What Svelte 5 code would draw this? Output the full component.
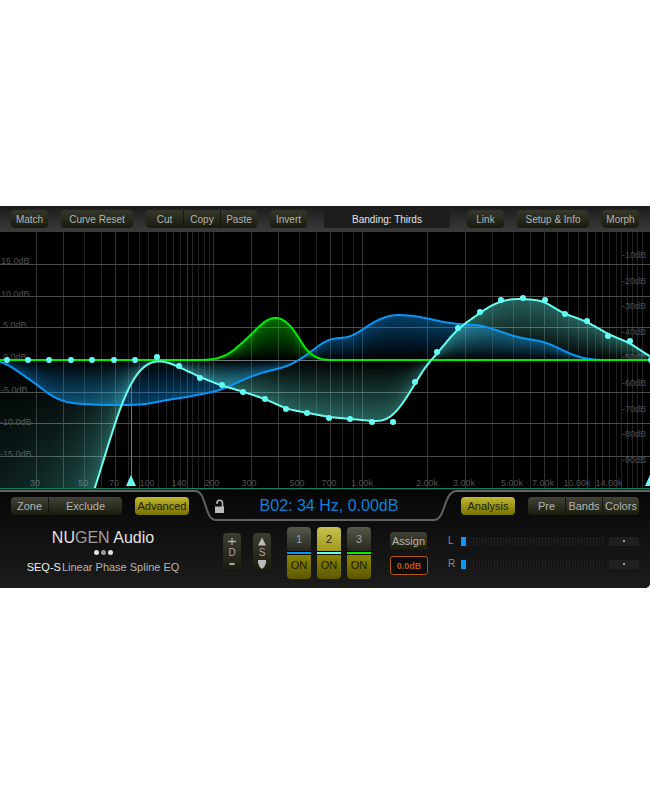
<script lang="ts">
	type Point = [number, number];

	const zero = 128;
	const bottom = 256;

	const gridX = [
		36, 63, 84, 101, 115, 128, 139, 148, 158, 166, 173, 180, 187, 192, 198, 204, 209, 213, 251, 278,
		299, 316, 330, 342, 353, 362, 427, 465, 492, 513, 530, 544, 557, 568, 578, 587, 595, 602, 609,
		616, 621, 627, 632, 637, 642
	];
	const strongX = [36, 63, 115, 187, 213, 251, 278, 330, 362, 427, 465, 544, 587];
	const gridY = [32, 64, 95, 128, 160, 191, 224];

	const gainLabels = [
		{ text: '15.0dB', x: 1, y: 32 },
		{ text: '10.0dB', x: 1, y: 65 },
		{ text: '5.0dB', x: 3, y: 96 },
		{ text: '0.0dB', x: 3, y: 128 },
		{ text: '-5.0dB', x: 1, y: 161 },
		{ text: '-10.0dB', x: 0, y: 193 },
		{ text: '-15.0dB', x: 0, y: 225 }
	];
	const levelLabels = [10, 20, 30, 40, 50, 60, 70, 80, 90];
	const freqLabels = [
		{ text: '30', x: 35 },
		{ text: '50', x: 83 },
		{ text: '70', x: 114 },
		{ text: '100', x: 147 },
		{ text: '140', x: 179 },
		{ text: '200', x: 212 },
		{ text: '300', x: 249 },
		{ text: '500', x: 297 },
		{ text: '700', x: 329 },
		{ text: '1.00k', x: 362 },
		{ text: '2.00k', x: 427 },
		{ text: '3.00k', x: 464 },
		{ text: '5.00k', x: 512 },
		{ text: '7.00k', x: 543 },
		{ text: '10.00k', x: 577 },
		{ text: '14.00k', x: 609 }
	];

	const blue: Point[] = [
		[0, 130], [7, 132], [13, 136], [23, 143], [36, 152], [50, 163], [60, 168], [70, 171], [83, 172],
		[103, 173], [117, 173], [133, 173], [147, 172], [167, 168], [187, 165], [207, 161], [217, 159],
		[228, 155], [245, 147], [258, 142], [268, 139], [282, 136], [292, 132], [299, 128], [312, 119],
		[322, 111], [330, 107], [337, 106], [345, 106], [352, 104], [362, 98], [372, 91], [382, 86],
		[392, 83], [402, 83], [415, 84], [430, 87], [443, 90], [458, 92], [470, 93], [480, 93],
		[490, 96], [502, 100], [513, 104], [527, 107], [540, 109], [550, 112], [562, 118], [573, 123],
		[587, 127], [600, 128], [651, 128]
	];
	const green: Point[] = [
		[0, 128], [205, 128], [215, 127], [222, 125], [232, 120], [243, 110], [252, 102], [260, 93],
		[268, 87], [276, 85], [283, 87], [290, 93], [297, 102], [303, 114], [310, 122], [317, 126],
		[325, 128], [651, 128]
	];
	const cyan: Point[] = [
		[0, 540], [95, 256], [101, 236], [108, 214], [115, 191], [122, 171], [131, 151], [138, 140],
		[147, 132], [155, 129], [160, 129], [167, 130], [179, 135], [200, 145], [220, 153], [244, 160],
		[265, 167], [287, 177], [308, 181], [329, 185], [351, 187], [372, 189], [382, 189], [388, 187],
		[395, 181], [402, 173], [408, 163], [415, 152], [422, 140], [429, 130], [437, 122], [447, 109],
		[458, 97], [467, 90], [480, 81], [490, 74], [502, 69], [512, 67], [523, 67], [537, 68],
		[545, 70], [553, 75], [565, 82], [577, 86], [587, 90], [598, 96], [608, 102], [620, 107],
		[630, 111], [640, 118], [651, 125]
	];

	const dots: Point[] = [
		[7, 128], [28, 128], [49, 128], [71, 128], [92, 128], [114, 128], [135, 128], [157, 125],
		[179, 134], [200, 146], [222, 153], [243, 160], [265, 167], [286, 177], [307, 181], [329, 186],
		[350, 187], [372, 190], [393, 190], [415, 150], [437, 120], [458, 96], [480, 80], [501, 68],
		[523, 66], [545, 68], [565, 82], [587, 89], [608, 104], [630, 109], [651, 128]
	];

	// one y value per pixel column, eased between the control points
	function sample(points: Point[]): number[] {
		const raw: number[] = [];
		let i = 0;
		for (let x = 0; x <= 650; x++) {
			while (i < points.length - 2 && x >= points[i + 1][0]) i++;
			const [x0, y0] = points[i];
			const [x1, y1] = points[i + 1];
			raw.push(y0 + ((y1 - y0) * (x - x0)) / (x1 - x0));
		}
		let out = raw;
		for (let pass = 0; pass < 3; pass++) {
			const src = out;
			out = src.map((_, x) => {
				const r = Math.min(4, x, 650 - x);
				let sum = 0;
				for (let k = -r; k <= r; k++) sum += src[x + k];
				return sum / (2 * r + 1);
			});
		}
		return out;
	}

	function toPath(ys: number[]): string {
		return ys.map((y, x) => `${x ? 'L' : 'M'}${x} ${y.toFixed(2)}`).join('');
	}

	// every column fades from the zero line towards the curve
	function toColumns(ys: number[]) {
		return ys
			.map((y, x) => ({ x, y: Math.min(y, zero), h: Math.abs(y - zero), up: y < zero }))
			.filter((c) => c.h > 0.5);
	}

	const curves = [
		{ name: 'blue', ys: sample(blue), color: '#0a96f5', opacity: 0.42 },
		{ name: 'green', ys: sample(green), color: '#00ee00', opacity: 0.45 },
		{ name: 'cyan', ys: sample(cyan), color: '#66fff0', opacity: 0.38 }
	];

	const bands = ['1', '2', '3'];
	let selected = $state('2');
	let gain = $state('0.0dB');
</script>

<main>
	<div class="plugin">
		<header class="toolbar">
			<button class="btn small">Match</button>
			<button class="btn wide">Curve Reset</button>
			<div class="group">
				<button class="btn small">Cut</button>
				<button class="btn small">Copy</button>
				<button class="btn small">Paste</button>
			</div>
			<button class="btn small">Invert</button>
			<button class="banding">Banding: Thirds</button>
			<button class="btn small">Link</button>
			<button class="btn wide">Setup &amp; Info</button>
			<button class="btn small">Morph</button>
		</header>

		<svg class="chart" viewBox="0 0 650 258" role="img" aria-label="EQ curves">
			<defs>
				{#each curves as c}
					<linearGradient id="{c.name}-up" x1="0" y1="1" x2="0" y2="0">
						<stop offset="0" stop-color={c.color} stop-opacity="0" />
						<stop offset="1" stop-color={c.color} stop-opacity={c.opacity} />
					</linearGradient>
					<linearGradient id="{c.name}-down" x1="0" y1="0" x2="0" y2="1">
						<stop offset="0" stop-color={c.color} stop-opacity="0" />
						<stop offset="1" stop-color={c.color} stop-opacity={c.opacity} />
					</linearGradient>
				{/each}
				<clipPath id="plot"><rect width="650" height={bottom} /></clipPath>
			</defs>
			{#each gridX as x}
				<rect {x} y="0" width="1" height={bottom} fill={strongX.includes(x) ? '#323232' : '#232323'} />
			{/each}
			{#each gridY as y}
				<rect x="0" {y} width="650" height="1" fill={y === zero ? '#777' : '#4c4c4c'} />
			{/each}
			<g class="labels">
				{#each gainLabels as l}
					<text x={l.x} y={l.y}>{l.text}</text>
				{/each}
				{#each levelLabels as db, i}
					<text x="646" y={26 + Math.round(i * 25.6)} text-anchor="end">-{db}dB</text>
				{/each}
				{#each freqLabels as l}
					<text x={l.x} y="254" text-anchor="middle">{l.text}</text>
				{/each}
			</g>
			<g clip-path="url(#plot)">
				{#each curves as c}
					<g shape-rendering="crispEdges">
						{#each toColumns(c.ys) as col}
							<rect x={col.x} y={col.y} width="1" height={col.h} fill="url(#{c.name}-{col.up ? 'up' : 'down'})" />
						{/each}
					</g>
				{/each}
				<rect x="131" y="151" width="1" height="94" fill="#3c8f88" />
				{#each curves as c}
					<path d={toPath(c.ys)} fill="none" stroke={c.color} stroke-width="2" />
				{/each}
				{#each dots as [x, y]}
					<circle cx={x} cy={y} r="3" fill="#66fff5" />
				{/each}
				<path d="M131 243l5 11h-10zM650 243l5 11h-10z" fill="#66fff5" />
			</g>
			<rect x="0" y="256" width="650" height="1" fill="#1c7a58" />
			<rect x="0" y="257" width="650" height="1" fill="#0c2a20" />
		</svg>

		<section class="panel">
			<svg class="outline" viewBox="0 0 650 32" aria-hidden="true">
				<path
					d="M0 1H195C207 1 204 30 216 30H434C446 30 443 1 457 1H650"
					fill="none"
					stroke="#626262"
					stroke-width="2"
				/>
			</svg>

			<div class="row top">
				<div class="group">
					<button class="btn mode small">Zone</button>
					<button class="btn mode exclude">Exclude</button>
				</div>
				<button class="btn mode active">Advanced</button>
				<div class="readout">
					<svg class="lock" width="12" height="15" viewBox="0 0 12 15" aria-hidden="true">
						<path d="M3 5V4a2.500 2.500 0 0 1 5.500 0V8" fill="none" stroke="#bbb" stroke-width="1.500" />
						<rect x="1" y="7.500" width="9" height="6.500" fill="#bbb" />
					</svg>
					<output>B02: 34 Hz, 0.00dB</output>
				</div>
				<button class="btn mode active">Analysis</button>
				<div class="group">
					<button class="btn mode small">Pre</button>
					<button class="btn mode small">Bands</button>
					<button class="btn mode small">Colors</button>
				</div>
			</div>

			<div class="row main">
				<div class="brand">
					<h1>NU<span>GEN</span> Audio</h1>
					<div class="pips"><i></i><i class="dim"></i><i></i></div>
					<p><b>SEQ-S</b><span>Linear Phase Spline EQ</span></p>
				</div>

				<div class="controls">
					<button class="stepper" aria-label="Depth">
						<svg width="8" height="8" viewBox="0 0 8 8"><path d="M4 1v7M0 4.500h8" stroke="#aaa" stroke-width="1.300" /></svg>
						<span>D</span>
						<svg width="8" height="8" viewBox="0 0 8 8"><path d="M1.500 3h5" stroke="#aaa" stroke-width="2" /></svg>
					</button>
					<button class="stepper" aria-label="Shift">
						<svg width="8" height="9" viewBox="0 0 8 9"><path d="M4 0.500l4 8H0z" fill="#bbb" /></svg>
						<span>S</span>
						<svg width="8" height="9" viewBox="0 0 8 9"><path d="M0 0h8v3q-1 4-4 6q-3-2-4-6z" fill="#bbb" /></svg>
					</button>
					<div class="bands">
						{#each bands as band}
							<div class="band band-{band}">
								<button
									class="number"
									class:selected={selected === band}
									aria-pressed={selected === band}
									onclick={() => (selected = band)}>{band}</button
								>
								<button class="on" aria-label="Band {band} on">ON</button>
							</div>
						{/each}
					</div>
					<div class="assign">
						<button class="btn mode small">Assign</button>
						<input type="text" aria-label="Output gain" bind:value={gain} />
					</div>
				</div>

				<div class="meters">
					{#each ['L', 'R'] as channel}
						<div class="meter">
							<span>{channel}</span>
							<div class="bar" role="meter" aria-label="{channel} level" aria-valuenow="4" aria-valuemin="0" aria-valuemax="100">
								<div class="level"></div>
							</div>
							<div class="peak"><i></i></div>
						</div>
					{/each}
				</div>
			</div>
		</section>
	</div>
</main>

<style>
	:global(body) {
		margin: 0;
		background: #ffffff;
	}

	main {
		min-height: 100vh;
		display: flex;
		flex-direction: column;
		justify-content: center;
		font-family: 'Liberation Sans', Arial, sans-serif;
	}

	.plugin {
		background: #000000;
		border-bottom-right-radius: 5px;
		overflow: hidden;
	}

	button,
	input {
		font-family: inherit;
		border: 0;
		margin: 0;
		padding: 0;
		box-sizing: border-box;
	}

	.toolbar {
		display: flex;
		align-items: center;
		gap: 13px;
		height: 26px;
		padding: 0 11px;
		background: linear-gradient(#1b1b1b, #3b3b3b);
	}

	.btn {
		height: 18px;
		padding-top: 2px;
		border-radius: 4px;
		background: linear-gradient(#35372b, #171b0c);
		color: #b4b4b4;
		font-size: 10px;
		line-height: 16px;
		white-space: nowrap;
		flex: none;
	}

	.small {
		width: 37px;
	}

	.wide {
		width: 72px;
	}

	.exclude {
		width: 74px;
	}

	.group {
		display: flex;
		flex: none;
	}

	.group .btn {
		border-radius: 0;
	}

	.group .btn + .btn {
		border-left: 1px solid #14160f;
	}

	.group .btn:first-child {
		border-radius: 4px 0 0 4px;
	}

	.group .btn:last-child {
		border-radius: 0 4px 4px 0;
	}

	.banding {
		flex: 1;
		height: 18px;
		margin: 0 4px;
		border-radius: 3px;
		background: #1d1d1d;
		color: #e4e4e4;
		font-size: 10px;
	}

	.chart {
		display: block;
		width: 100%;
		height: auto;
		background: #000000;
	}

	.labels text {
		font-size: 9px;
		fill: #505050;
	}

	.panel {
		position: relative;
		background: linear-gradient(#060606, #1c1c1c);
		padding-bottom: 9px;
	}

	.outline {
		position: absolute;
		top: 0;
		left: 0;
		width: 100%;
		height: auto;
	}

	.row {
		position: relative;
		display: flex;
		padding: 0 11px;
	}

	.top {
		padding-top: 7px;
		align-items: center;
		gap: 13px;
	}

	.mode {
		padding-top: 0;
		font-size: 11px;
		line-height: 18px;
		background: linear-gradient(#424337, #191d0d);
	}

	.active {
		width: 54px;
		background: linear-gradient(#c2b832, #767000);
		color: #1c1c08;
	}

	.readout {
		flex: 1;
		display: flex;
		align-items: center;
		padding-left: 12px;
	}

	.lock {
		flex: none;
	}

	output {
		flex: 1;
		padding-right: 16px;
		text-align: center;
		white-space: nowrap;
		font-size: 16px;
		line-height: 18px;
		color: #0f80d8;
	}

	.main {
		margin-top: 12px;
		align-items: flex-start;
	}

	.brand {
		flex: 1;
		padding-right: 8px;
		text-align: center;
		line-height: 12px;
	}

	h1 {
		margin: 2px 0 0;
		font-size: 16px;
		line-height: 18px;
		font-weight: 400;
		color: #e2e2e2;
	}

	h1 span {
		color: #a0a0a0;
	}

	.pips {
		display: flex;
		justify-content: center;
		gap: 2px;
		margin: 3px 0 5px;
	}

	.pips i {
		width: 5px;
		height: 5px;
		border-radius: 50%;
		background: #e0e0e0;
	}

	.pips .dim {
		background: #999999;
	}

	p {
		margin: 0;
		font-size: 11px;
		line-height: 14px;
		color: #b4b4b4;
		white-space: nowrap;
	}

	p b {
		font-weight: 400;
		color: #ededed;
		margin-right: 1px;
	}

	.controls {
		flex: none;
		display: flex;
		align-items: flex-start;
		gap: 12px;
		margin: 0 20px;
	}

	.stepper {
		display: flex;
		flex-direction: column;
		align-items: center;
		justify-content: space-between;
		width: 18px;
		height: 38px;
		margin-top: 6px;
		padding: 4px 0 2px;
		border-radius: 4px;
		background: linear-gradient(#3c3e32, #171b0c);
		color: #a8a8a8;
		font-size: 10px;
		line-height: 10px;
	}

	.bands {
		display: flex;
		gap: 6px;
		margin-left: 4px;
	}

	.band {
		display: flex;
		flex-direction: column;
		width: 24px;
		border-radius: 4px;
		overflow: hidden;
	}

	.number,
	.on {
		height: 25px;
		font-size: 11px;
	}

	.number {
		background: linear-gradient(#555749, #26281e);
		color: #a0a0a0;
		border-bottom: 1px solid #000000;
	}

	.selected {
		background: linear-gradient(#c6c050, #a09a20);
		color: #1c1c08;
	}

	.on {
		height: 27px;
		padding-bottom: 3px;
		background: linear-gradient(#8e8800, #5c5800);
		color: #1c1c08;
		border-top: 2px solid #0a96f5;
		box-shadow: inset 0 1px #000000;
	}

	.band-2 .on {
		border-top-color: #66fff0;
	}

	.band-3 .on {
		border-top-color: #00ee00;
	}

	.assign {
		display: flex;
		flex-direction: column;
		gap: 6px;
		margin: 5px 0 0 7px;
	}

	.assign input {
		width: 38px;
		height: 19px;
		border: 1px solid #b3560f;
		border-radius: 3px;
		background: #0c0c0c;
		color: #b8560c;
		font-size: 9px;
		font-weight: 700;
		text-align: center;
	}

	.meters {
		flex: none;
		width: 191px;
		display: flex;
		flex-direction: column;
		gap: 9px;
		padding-top: 7px;
	}

	.meter {
		display: flex;
		align-items: center;
		font-size: 10px;
		line-height: 14px;
		color: #888888;
	}

	.meter span {
		width: 13px;
	}

	.bar {
		flex: 1;
		height: 9px;
		background: repeating-linear-gradient(90deg, #1e1e1e 0 1px, #141414 1px 3px);
	}

	.level {
		width: 5px;
		height: 9px;
		background: #0a96ff;
	}

	.peak {
		display: flex;
		align-items: center;
		justify-content: center;
		width: 30px;
		height: 9px;
		margin-left: 4px;
		background: #202020;
	}

	.peak i {
		width: 2px;
		height: 2px;
		background: #999999;
	}
</style>
